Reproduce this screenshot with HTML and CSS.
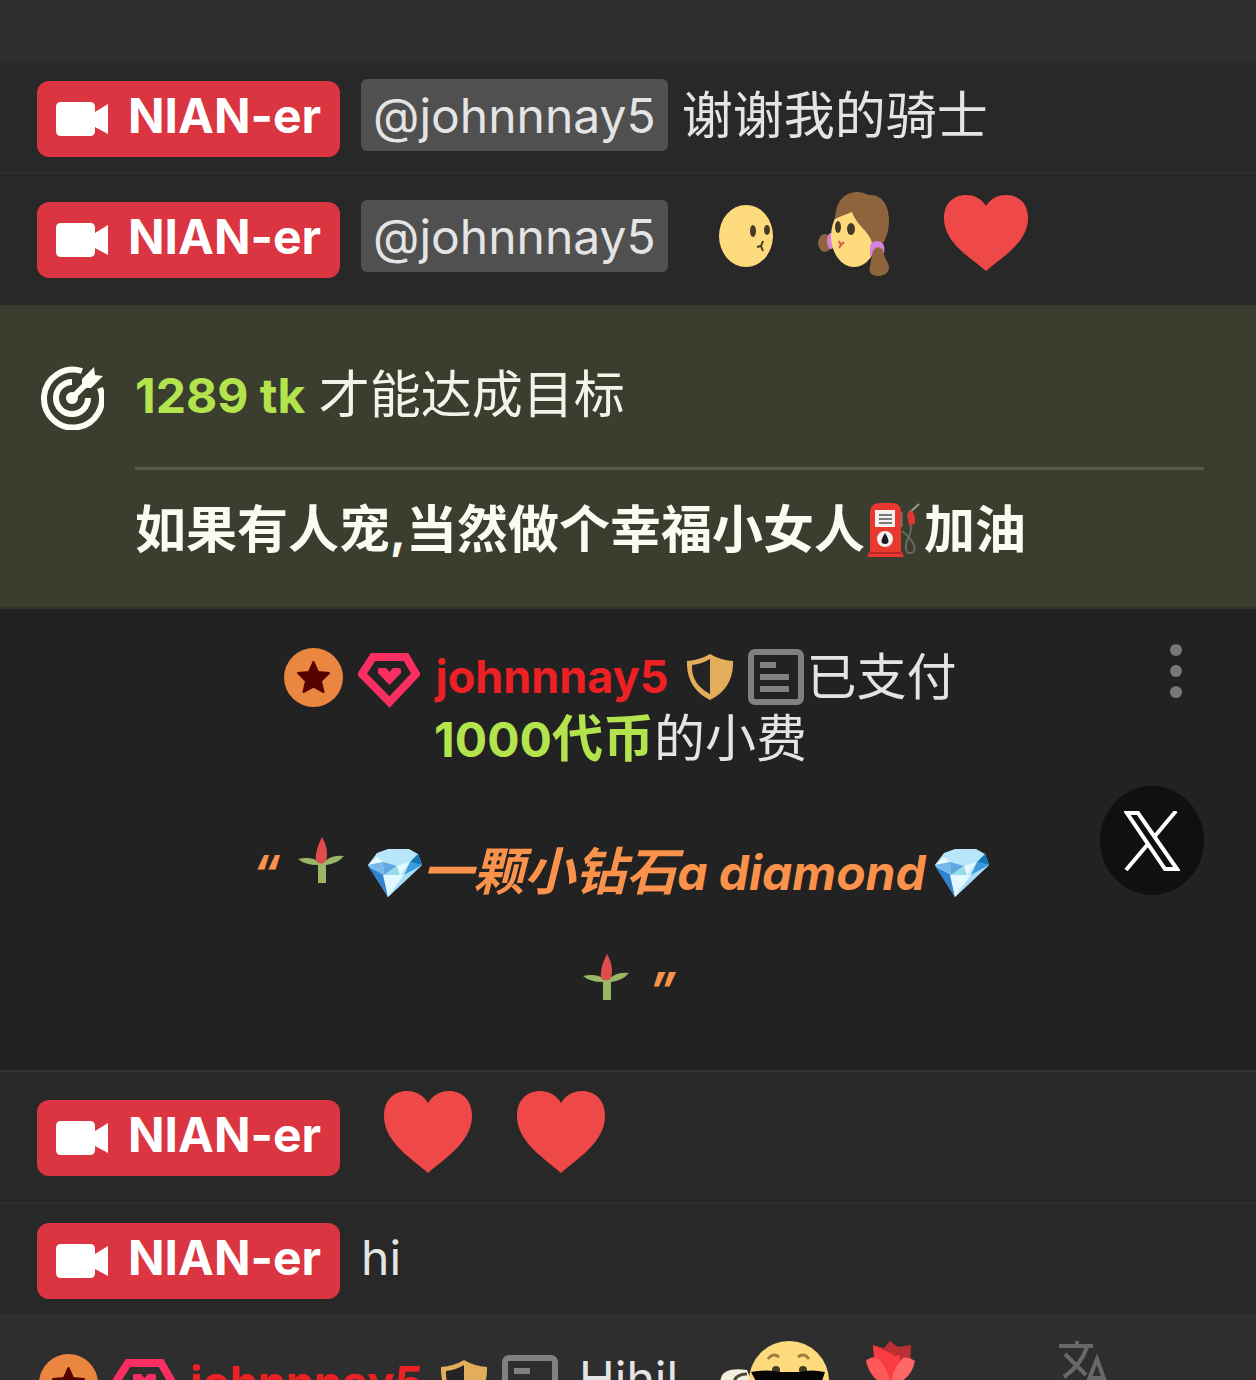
FILE: index.html
```html
<!DOCTYPE html>
<html lang="zh-CN">
<head>
<meta charset="utf-8">
<meta name="viewport" content="width=device-width, initial-scale=1">
<title>Chat</title>
<link rel="stylesheet" href="styles.css">
</head>
<body>
<svg class="sprite" aria-hidden="true">
  <symbol id="camera" viewBox="0 0 52 34"><path d="M5 0H34Q39 0 39 5V10L52 2V32L39 25V29Q39 34 34 34H5Q0 34 0 29V5Q0 0 5 0Z" fill="#fff"/></symbol>
  <symbol id="heart" viewBox="0 0 88 82" preserveAspectRatio="none"><path d="M44 82C30 69 0 52 0 25C0 9 10 0 23 0C33 0 40 5 44 12C48 5 55 0 65 0C78 0 88 9 88 25C88 52 58 69 44 82Z" fill="#ef4848"/></symbol>
  <symbol id="star" viewBox="0 0 59 59"><circle cx="29.500" cy="29.500" r="29.500" fill="#ea8640"/><path d="M29.500 14L34 24L45 25L37 33L39.500 44L29.500 38.500L19.500 44L22 33L14 25L25 24Z" fill="#560000" stroke="#560000" stroke-width="2" stroke-linejoin="round"/></symbol>
  <symbol id="gem" viewBox="0 0 62 66"><path d="M15 13H48L58 30L31.500 58L4 30Z" fill="none" stroke="#fb2e61" stroke-width="8"/><path d="M31.500 41L20 29V25Q20 24 22 24H28L31.500 28L35 24H41Q43 24 43 26V29Z" fill="#fb2e61"/></symbol>
  <symbol id="shield" viewBox="0 0 46 46"><path d="M23 0Q33 6 46 7Q47 34 23 46Q-1 34 0 7Q13 6 23 0Z" fill="#e2ae5b"/><path d="M23 5V40Q4 30 5 11Q15 10 23 5Z" fill="#242424"/></symbol>
  <symbol id="note" viewBox="0 0 56 56"><rect x="3" y="3" width="50" height="50" rx="4" fill="none" stroke="#808080" stroke-width="6"/><path d="M12 16H28M12 28H41M12 40H41" stroke="#808080" stroke-width="6"/></symbol>
  <symbol id="sprout" viewBox="0 0 46 46"><path d="M0 22Q12 19 20 24H27Q34 18 46 19Q39 27 28 28V46H20V28Q7 28 0 22Z" fill="#99b764"/><path d="M24 0C29 8 30 17 28 24Q23 29 18 24C17 16 20 8 24 0Z" fill="#e04c4a"/></symbol>
  <symbol id="diamond" viewBox="0 0 54 48"><path d="M0 16L9 4L20 0H41L50 5L54 16L20 48Z" fill="#b8e6fa"/><path d="M0 17L16 26L20 48Z" fill="#2f83cf"/><path d="M15 26H36L20 48Z" fill="#e4f8ff"/><path d="M36 26L54 16L20 48Z" fill="#a9dcf6"/><path d="M0 16L9 8L15 13Z" fill="#e9f9ff"/><path d="M15 13L0 16L16 26Z" fill="#76b8ec"/><path d="M15 13L29 17L16 26Z" fill="#60a8df"/><path d="M29 17L16 26H32Z" fill="#97dbe9"/><path d="M29 17L42 13L32 26Z" fill="#e4f8ff"/><path d="M42 13L54 16L36 26Z" fill="#3b9bd8"/><path d="M42 13L50 5L54 16Z" fill="#0f77b6"/></symbol>
</svg>

<main class="chat">
  <div class="row row-spacer"></div>

  <div class="row row-text">
    <button class="badge" type="button"><svg class="cam"><use href="#camera"/></svg>NIAN-er</button>
    <a class="mention" href="#johnnnay5">@johnnnay5</a>
    <span class="message">谢谢我的骑士</span>
  </div>

  <div class="row row-emotes">
    <button class="badge" type="button"><svg class="cam"><use href="#camera"/></svg>NIAN-er</button>
    <a class="mention" href="#johnnnay5">@johnnnay5</a>
    <span class="emotes emotes-faces">
      <svg width="54" height="84" viewBox="0 0 54 84" role="img" aria-label="face">
        <ellipse cx="27" cy="44" rx="27" ry="31" fill="#fddb7c"/>
        <ellipse cx="34" cy="39" rx="3" ry="6" fill="#453a24"/><ellipse cx="48" cy="38" rx="3" ry="5" fill="#453a24"/>
        <path d="M44 49L42 54L38 55M42 54L44 59" fill="none" stroke="#453a24" stroke-width="2"/>
      </svg>
      <svg width="72" height="84" viewBox="0 0 72 84" role="img" aria-label="girl">
        <ellipse cx="7" cy="51" rx="7" ry="9" fill="#8e643c"/><ellipse cx="13" cy="49" rx="4" ry="8" fill="#d681dc"/>
        <ellipse cx="36" cy="44" rx="23" ry="31" fill="#fddb7c"/>
        <path d="M17 27C18 9 26 0 40 0C46 0 49 3 51 3C65 2 71 15 71 28C71 37 69 44 66 50L54 51C52 40 39 34 34 20C28 22 22 25 17 27Z" fill="#8e643c"/>
        <ellipse cx="20" cy="35" rx="3" ry="6" fill="#453a24"/><ellipse cx="33" cy="37" rx="4" ry="6" fill="#453a24"/>
        <path d="M21 49L23 53L26 50M23 53L21 56" fill="none" stroke="#dc5a47" stroke-width="2"/>
        <path d="M52 64V56Q52 49 59 49Q68 49 66 61Z" fill="#d681dc"/>
        <path d="M55 59Q60 52 65 58C65 65 71 70 71 76C70 82 65 84 60 84C54 84 50 81 52 74C53 69 54 63 55 59Z" fill="#8e643c"/>
      </svg>
      <svg class="heart-small" width="84" height="76" role="img" aria-label="heart"><use href="#heart" width="84" height="76"/></svg>
    </span>
  </div>

  <section class="goal">
    <svg class="goal-icon" viewBox="0 0 64 64" aria-hidden="true">
      <g fill="none" stroke="#fdfff5" stroke-width="6"><path d="M42 5A29 29 0 1 0 60 22"/><path d="M32 16A16 16 0 1 0 48 32"/></g>
      <path d="M32 32L46 18" stroke="#fdfff5" stroke-width="6"/><circle cx="32" cy="32" r="6" fill="#fdfff5"/>
      <path d="M42 22V13L54 1L55 9L63 10L51 22Z" fill="#fdfff5"/>
    </svg>
    <div class="goal-body">
      <p class="goal-left"><strong>1289 tk</strong> <span class="han">才能达成目标</span></p>
      <p class="goal-title"><span class="han">如果有人宠</span>,<span class="han">当然做个幸福小女人</span><svg class="pump" width="54" height="54" viewBox="0 0 54 54" role="img" aria-label="fuel">
        <path d="M35 28C48 38 51 49 44 50C37 51 38 41 42 33C46 25 43 21 42 17" fill="none" stroke="#666964" stroke-width="2"/><path d="M42 10L52 1" stroke="#9a9a94" stroke-width="2"/><path d="M40 11L45 7L48 14V21L42 22Z" fill="#df3535"/><path d="M34 9V24" stroke="#777" stroke-width="3"/>
        <path d="M3 10Q3 0 13 0H25Q34 0 34 9V48L37 54H0L3 48Z" fill="#e9392f"/><path d="M1 50H36" stroke="#b92925" stroke-width="2"/><rect x="8" y="7" width="20" height="17" fill="#f5f1ee"/><path d="M12 12H25M12 16H25M12 20H25" stroke="#77797a" stroke-width="2"/><circle cx="18" cy="36" r="8" fill="#f5f1ee"/><path d="M18 30Q25 41 18 41Q11 41 18 30Z" fill="#211a24"/>
      </svg><span class="han">加油</span></p>
    </div>
  </section>

  <section class="tip">
    <div class="tip-body">
      <p class="tip-line">
        <svg class="i-star"><use href="#star"/></svg><svg class="i-gem"><use href="#gem"/></svg>
        <a class="user" href="#johnnnay5">johnnnay5</a>
        <svg class="i-shield"><use href="#shield"/></svg>
        <span class="tip-paid"><svg class="i-note"><use href="#note"/></svg>已支付</span>
      </p>
      <p class="tip-amount"><strong>1000<span class="han">代币</span></strong><span class="han">的小费</span></p>
      <p class="quote">“<svg class="sprout"><use href="#sprout"/></svg><svg class="diamond diamond-start"><use href="#diamond"/></svg><span class="han">一颗小钻石</span>a diamond<svg class="diamond diamond-end"><use href="#diamond"/></svg><br><svg class="sprout"><use href="#sprout"/></svg>”</p>
    </div>
    <button class="menu" type="button" aria-label="菜单"><svg width="12" height="54" viewBox="0 0 12 54"><g fill="#787878"><circle cx="6" cy="6" r="6"/><circle cx="6" cy="27" r="6"/><circle cx="6" cy="48" r="6"/></g></svg></button>
    <button class="share" type="button" aria-label="X"><svg width="56" height="60" viewBox="0 0 56 60"><path d="M3 2H14L53 58H41Z" fill="none" stroke="#fff" stroke-width="4"/><path d="M52 0L31 25M24 33L2 59" stroke="#fff" stroke-width="4"/></svg></button>
  </section>

  <div class="row row-hearts">
    <button class="badge" type="button"><svg class="cam"><use href="#camera"/></svg>NIAN-er</button>
    <span class="emotes">
      <svg width="88" height="82" role="img" aria-label="heart"><use href="#heart" width="88" height="82"/></svg>
      <svg width="88" height="82" role="img" aria-label="heart"><use href="#heart" width="88" height="82"/></svg>
    </span>
  </div>

  <div class="row row-last">
    <button class="badge" type="button"><svg class="cam"><use href="#camera"/></svg>NIAN-er</button>
    <span class="greeting">hi</span>
  </div>

  <div class="row row-user">
    <svg class="i-star"><use href="#star"/></svg><svg class="i-gem"><use href="#gem"/></svg>
    <a class="user" href="#johnnnay5">johnnnay5</a>
    <svg class="i-shield"><use href="#shield"/></svg><svg class="i-note"><use href="#note"/></svg>
    <span class="laugh">Hihil</span>
    <svg class="cool" width="112" height="84" viewBox="0 0 112 84" role="img" aria-label="cool">
      <path d="M28 29Q5 26 2 37Q-2 50 14 54L34 44Z" fill="#f3f0df"/><path d="M28 33Q16 33 15 42" fill="none" stroke="#4a4635" stroke-width="3"/>
      <circle cx="70" cy="40" r="40" fill="#fddb7c"/><path d="M49 18Q54 11 60 16M79 16Q85 11 90 18" fill="none" stroke="#9c7e41" stroke-width="3"/>
      <circle cx="57" cy="29" r="4" fill="#453a24"/><circle cx="84" cy="29" r="4" fill="#453a24"/>
      <path d="M32 31Q50 28 61 31H80Q92 28 106 31L101 46Q85 54 76 40H66Q55 54 40 46Z" fill="#050505"/>
    </svg>
    <svg class="tulip" width="50" height="84" viewBox="0 0 50 84" role="img" aria-label="tulip">
      <path d="M7 4L18 7L24 0L32 6L45 4L44 28H8Z" fill="#ba3034"/><path d="M7 4L28 14L25 42H12Z" fill="#f93c40"/><path d="M25 16L34 14V42H20Z" fill="#f93c40"/><path d="M0 20Q4 15 11 17Q22 26 25 44Q5 42 0 20Z" fill="#ff5959"/><path d="M49 20Q43 15 37 17Q26 28 25 44Q45 40 49 20Z" fill="#ff6868"/><path d="M25 42V84" stroke="#99b764" stroke-width="6"/>
    </svg>
    <button class="translate" type="button" aria-label="翻译"><svg width="50" height="50" viewBox="0 0 50 50"><path d="M0 5H34M18 0V5M6 13L27 34M28 6Q22 24 5 36" fill="none" stroke="#686868" stroke-width="4"/><path d="M27 46L38 18L48 46M31 37H45" fill="none" stroke="#686868" stroke-width="4"/></svg></button>
  </div>
</main>
</body>
</html>
```
FILE: styles.css
```css
* { box-sizing: border-box; }

body {
  margin: 0;
  background: #282828;
  color: #e4e4e4;
  font-family: Inter, "Noto Sans CJK SC", sans-serif;
  font-size: 48px;
  line-height: 60px;
}

p { margin: 0; }
svg { display: block; flex: none; }
a { color: inherit; text-decoration: none; }
button {
  border: 0;
  background: none;
  padding: 0;
  color: inherit;
  font: inherit;
}

.sprite { position: absolute; width: 0; height: 0; }
.han { font-size: 51px; line-height: 50px; }

.chat {
  height: 100vh;
  overflow: hidden;
}

.row {
  display: flex;
  align-items: flex-start;
  padding: 0 37px;
  background: #282828;
  white-space: nowrap;
}
.row-spacer { height: 63px; background: #2e2e2e; }
.row-text { padding-top: 16px; padding-bottom: 15px; border-bottom: 2px solid #2e2e2e; }
.row-emotes { padding-top: 26px; padding-bottom: 27px; }
.row-hearts { padding-top: 26px; padding-bottom: 26px; border-bottom: 2px solid #2e2e2e; }
.row-last { padding-top: 17px; padding-bottom: 15px; }

.badge {
  display: flex;
  align-items: center;
  gap: 20px;
  margin-top: 2px;
  padding: 5px 19px 11px;
  border-radius: 12px;
  background: #da3540;
  color: #fff;
  font-weight: 700;
}
.cam { width: 52px; height: 34px; margin-top: 5px; }

.mention {
  margin-left: 21px;
  padding: 7px 12px 5px;
  border-radius: 6px;
  background: #505050;
}
.message { margin-top: 7px; margin-left: 14px; font-size: 51px; }
.greeting { margin-top: 7px; margin-left: 21px; }

.emotes {
  display: flex;
  gap: 45px;
  margin-top: -7px;
  margin-left: 44px;
}
.emotes-faces { margin-top: -8px; margin-left: 51px; }
.heart-small { margin-top: 3px; margin-left: 9px; }

.goal {
  display: flex;
  gap: 31px;
  padding: 61px 52px 46px 40px;
  border-bottom: 2px solid #33352c;
  background: #3b3e2e;
  color: #fafcf2;
}
.goal-icon { width: 64px; height: 64px; }
.goal-body { flex: 1; }
.goal-left { padding-bottom: 41px; border-bottom: 3px solid #565a4a; color: #f2f4ea; }
.goal-left strong, .tip-amount strong { color: #b3e34d; font-weight: 700; }
.goal-title { padding-top: 31px; font-weight: 700; }
.pump { display: inline-block; margin: 0 3px 0 2px; vertical-align: -9px; }

.tip {
  display: grid;
  padding: 35px 52px 22px 37px;
  border-bottom: 2px solid #353535;
  background: #222;
}
.tip-body, .menu, .share { grid-area: 1 / 1; }
.menu { place-self: start end; margin-right: 22px; }
.tip-line { display: flex; align-items: center; justify-content: center; gap: 15px; height: 66px; }
.tip-paid { display: flex; align-items: center; gap: 3px; font-size: 50px; }
.tip-amount { text-align: center; }
.i-star { width: 59px; height: 59px; }
.i-gem { width: 62px; height: 66px; }
.i-shield { width: 46px; height: 46px; }
.i-note { width: 56px; height: 56px; }
.user { margin-right: 3px; color: #ed2024; font-size: 45px; font-weight: 700; }

.quote {
  margin-top: 44px;
  color: #fa924b;
  font-style: italic;
  font-weight: 700;
  line-height: 117px;
  text-align: center;
}
.sprout { display: inline-block; width: 46px; height: 46px; margin: 0 20px 0 18px; vertical-align: 7px; }
.diamond { display: inline-block; width: 54px; height: 48px; vertical-align: -7px; }
.diamond-start { margin-left: 4px; }
.diamond-end { margin-left: 9px; }

.share {
  display: grid;
  place-items: center;
  place-self: start end;
  width: 104px;
  height: 109px;
  margin-top: 142px;
  border-radius: 50%;
  background: #101010;
}

.row-user {
  align-items: center;
  gap: 15px;
  padding: 27px 37px 27px 39px;
  background: #2e2e2e;
}
.laugh { margin-left: 6px; padding-bottom: 8px; }
.cool { margin-left: 26px; }
.tulip { margin-left: 20px; }
.translate { align-self: flex-start; margin-left: 128px; }
```
